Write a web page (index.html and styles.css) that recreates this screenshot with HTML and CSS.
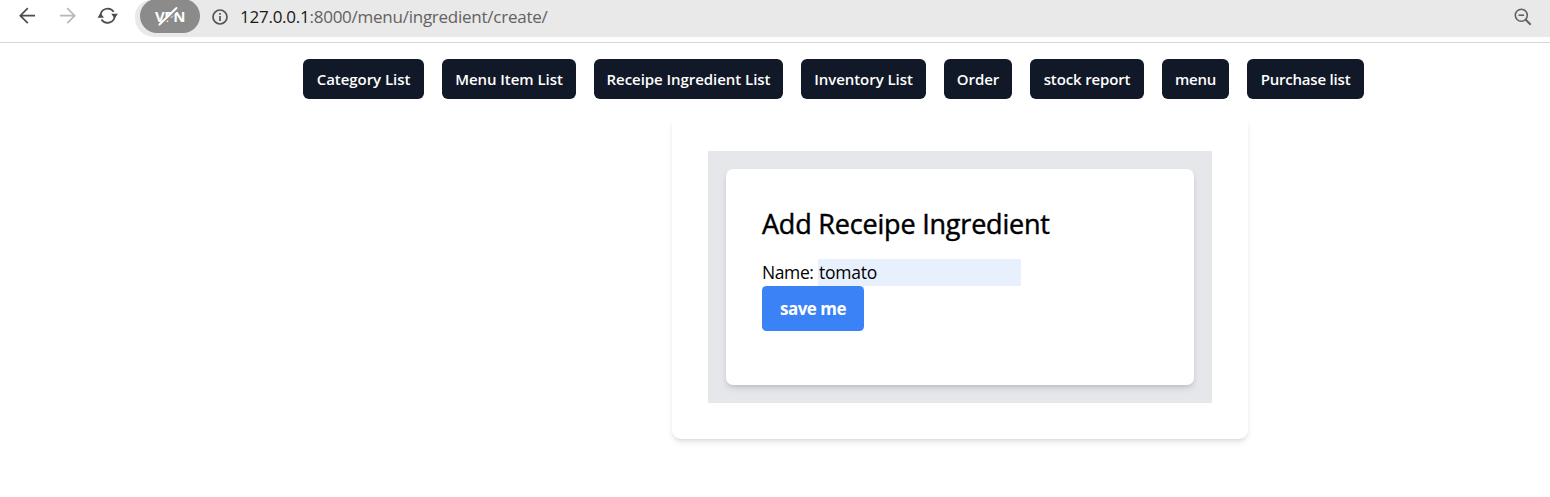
FILE: index.html
```html
<!DOCTYPE html>
<html lang="en">
<head>
<meta charset="utf-8">
<title>Add Receipe Ingredient</title>
<link rel="stylesheet" href="styles.css">
</head>
<body>
<header class="toolbar">
  <svg class="controls" width="135" height="37" viewBox="0 0 135 37" fill="none" stroke="#4d4d4d" stroke-width="1.7">
    <path d="M35 15.7H20.5M27.8 8.2L20.3 15.7L27.8 23.2"/>
    <path stroke="#b8b8b8" d="M60 15.7H74.5M67.2 8.2L74.7 15.7L67.2 23.2"/>
    <path d="M100.5 16.3A7.2 7.2 0 0 1 113.7 11.9M114.7 15.1A7.2 7.2 0 0 1 101.5 19.5"/>
    <path fill="#4d4d4d" stroke="none" d="M97.5 17.7L100.6 12.9L104 17.7ZM111.2 13.8H117.9L114.6 18.4Z"/>
  </svg>
  <div class="address">
    <div class="vpn"><span>VPN</span>
      <svg class="slash" width="26" height="24" viewBox="0 0 26 24" stroke-linecap="round"><path d="M7 20.5L21 7" stroke="#8b8b8b" stroke-width="2"/><path d="M4.5 20.5L21.5 4" stroke="#fff" stroke-width="2"/></svg>
    </div>
    <svg class="info" width="18" height="18" viewBox="0 0 18 18" fill="none" stroke="#555" stroke-width="1.7"><circle cx="9" cy="9" r="7"/><path d="M9 8V13M9 5V6.7"/></svg>
    <span class="url"><b>127.0.0.1</b>:8000/menu/ingredient/create/</span>
    <svg class="zoom" width="18" height="18" viewBox="0 0 18 18" fill="none" stroke="#626262" stroke-width="1.6"><circle cx="7.3" cy="7.2" r="6"/><path d="M4.5 7.2H10.1"/><path d="M11.5 11.5L16.7 16.7" stroke-width="2"/></svg>
  </div>
</header>
<nav class="nav">
  <a class="w-category">Category List</a>
  <a class="w-item">Menu Item List</a>
  <a class="w-ingredient">Receipe Ingredient List</a>
  <a class="w-inventory">Inventory List</a>
  <a class="w-order">Order</a>
  <a class="w-stock">stock report</a>
  <a class="w-menu">menu</a>
  <a class="w-purchase">Purchase list</a>
</nav>
<main class="panel">
  <div class="frame">
    <form class="card">
      <h1>Add Receipe Ingredient</h1>
      <div class="field"><label for="name">Name:</label><input id="name" value="tomato"></div>
      <button type="button">save me</button>
    </form>
  </div>
</main>
</body>
</html>
```
FILE: styles.css
```css
* { box-sizing: border-box; }
body { margin: 0; background: #fff; color: #000; font-family: "Open Sans", "Noto Sans", sans-serif; height: 497px; overflow: hidden; }
.toolbar { display: flex; height: 43px; border-bottom: 1px solid #d6d6d6; }
.controls { flex: none; }
.address { flex: 1; height: 37px; display: flex; align-items: center; background: #e9e9e9; border-radius: 0 0 0 19px; border-top-left-radius: 16px; padding: 0 18px 4px 5px; }
.vpn { position: relative; width: 60px; height: 34px; margin-top: -1px; border-radius: 17px; background: #8b8b8b; color: #fff; font-size: 15px; font-weight: 700; line-height: 35px; text-align: center; letter-spacing: -.4px; }
.slash { position: absolute; left: 15px; top: 5px; }
.info { margin-left: 11px; }
.url { margin-left: 11px; font-size: 17px; color: #626262; letter-spacing: -.25px; white-space: nowrap; }
.url b { color: #171717; font-weight: 400; }
.zoom { margin-left: auto; }
.nav { display: flex; gap: 18px; margin: 16px 0 0 303px; }
.nav a { height: 40px; border-radius: 6px; background: #111827; color: #fff; font-size: 15px; font-weight: 600; line-height: 40px; text-align: center; letter-spacing: -.05px; white-space: nowrap; }
.nav .w-category { width: 121px; }
.nav .w-item { width: 134px; }
.nav .w-ingredient { width: 189px; }
.nav .w-inventory { width: 125px; }
.nav .w-order { width: 68px; }
.nav .w-stock { width: 114px; letter-spacing: -.15px; }
.nav .w-menu { width: 67px; letter-spacing: -.3px; }
.nav .w-purchase { width: 117px; letter-spacing: -.2px; }
.panel { width: 576px; height: 324px; margin: 16px 0 0 672px; padding: 36px; border-radius: 9px; box-shadow: 0 4px 6px -1px rgba(0,0,0,.1), 0 2px 4px -2px rgba(0,0,0,.1); }
.frame { height: 252px; padding: 18px; background: #e5e7eb; }
.card { height: 216px; padding: 37px 36px 36px; background: #fff; border-radius: 7px; box-shadow: 0 4px 7px -1px rgba(0,0,0,.13), 0 2px 4px -2px rgba(0,0,0,.13); }
h1 { margin: 0 0 17px; font-size: 27px; line-height: 36px; font-weight: 500; letter-spacing: -.2px; white-space: nowrap; -webkit-text-stroke: .45px #000; }
.field { display: flex; align-items: center; height: 27px; font-size: 17.5px; }
label { width: 56px; letter-spacing: -.4px; line-height: 25px; padding-bottom: 1px; }
input { width: 203px; height: 27px; border: 0; padding: 0 1px 1px; background: #e8f0fe; color: #000; font: inherit; letter-spacing: -.25px; }
button { display: block; width: 102px; height: 45px; border: 0; border-radius: 4.5px; padding: 0; background: #3b82f6; color: #fff; font: 700 17px "Open Sans", sans-serif; letter-spacing: -.5px; }
```
